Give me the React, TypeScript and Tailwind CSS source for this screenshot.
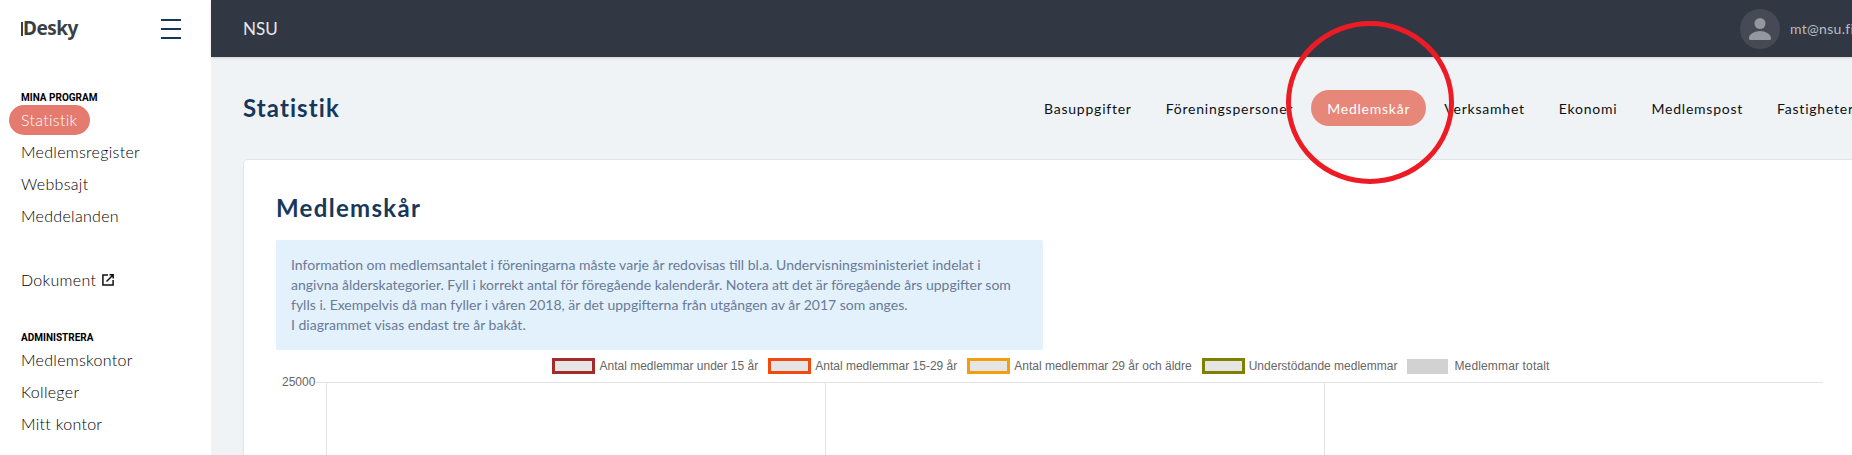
const navTop = ["Statistik", "Medlemsregister", "Webbsajt", "Meddelanden"];
const navAdmin = ["Medlemskontor", "Kolleger", "Mitt kontor"];
const tabs = ["Basuppgifter", "Föreningspersoner", "Medlemskår", "Verksamhet", "Ekonomi", "Medlemspost", "Fastigheter"];
const legend = [
  { label: "Antal medlemmar under 15 år", border: "border-[#a52a2a]" },
  { label: "Antal medlemmar 15-29 år", border: "border-[#f04a10]" },
  { label: "Antal medlemmar 29 år och äldre", border: "border-[#f59e0b]" },
  { label: "Understödande medlemmar", border: "border-[#808000]" },
];

function NavItem({ label, active }: { label: string; active?: boolean }) {
  return (
    <a
      className={
        active
          ? "mb-[1px] ml-[-12px] flex h-[30px] w-[81px] items-center rounded-full bg-[#e57a6e] pl-3 text-white"
          : "flex h-[32px] items-center text-black"
      }
    >
      {label}
    </a>
  );
}

export default function App() {
  return (
    <div className="relative flex h-[455px] w-[1852px] overflow-hidden bg-[#eff3f5] font-['Lato',sans-serif]">
      <aside className="flex w-[211px] shrink-0 flex-col bg-white pl-[21px] pr-[30px] text-[16px] font-light tracking-[0.3px]">
        <div className="flex h-[57px] items-center justify-between">
          <span className="flex items-center text-[19px] font-bold leading-none tracking-[-0.5px] text-[#3a3f46] font-['Noto_Sans',sans-serif]">
            <span className="mr-[0.5px] h-[14px] w-[1.5px] bg-[#3a3f46]" />
            Desky
          </span>
          <span className="flex h-[20px] w-[20px] flex-col justify-between">
            <span className="h-[2px] bg-[#14385c]" />
            <span className="h-[2px] bg-[#14385c]" />
            <span className="h-[2px] bg-[#14385c]" />
          </span>
        </div>
        <p className="mt-[35px] text-[10px] font-bold uppercase leading-[12px] tracking-normal text-black font-['Roboto',sans-serif]">Mina program</p>
        <div className="mt-[1px] flex flex-col">
          {navTop.map((item, i) => (
            <NavItem key={item} label={item} active={i === 0} />
          ))}
        </div>
        <a className="mt-[32px] flex h-[32px] items-center gap-[6px] text-black">
          Dokument
          <svg width="12" height="12" viewBox="0 0 12 12" fill="none" stroke="#111" strokeWidth="1.5">
            <path d="M6 .9H.9v10.2h10.2V6" />
            <path d="M4.500 7.500 11 1M7.500.8h3.700v3.700" />
          </svg>
        </a>
        <p className="mt-[36px] text-[10px] font-bold uppercase leading-[12px] tracking-normal text-black font-['Roboto',sans-serif]">Administrera</p>
        <div className="flex flex-col">
          {navAdmin.map((item) => (
            <NavItem key={item} label={item} />
          ))}
        </div>
      </aside>

      <div className="flex min-w-0 flex-1 flex-col">
        <header className="flex h-[57px] shrink-0 items-center justify-between bg-[#323843] pl-[32px] text-white shadow-sm">
          <span className="text-[17px] text-[#e8eaec]">NSU</span>
          <div className="flex w-[112px] shrink-0 items-center gap-[10px] overflow-hidden whitespace-nowrap">
            <svg className="shrink-0" width="40" height="40" viewBox="0 0 40 40">
              <circle cx="20" cy="20" r="20" fill="#454a54" />
              <circle cx="20" cy="14.500" r="5.500" fill="#94979d" />
              <path d="M9 29c0-4 6-7 11-7s11 3 11 7v.5a1.500 1.500 0 0 1-1.500 1.500h-19A1.500 1.500 0 0 1 9 29.500z" fill="#94979d" />
            </svg>
            <span className="text-[14px] tracking-[0.3px] text-[#b8bbc0]">mt@nsu.fi</span>
          </div>
        </header>

        <main className="flex-1 pl-[32px]">
          <div className="flex h-[102px] items-center justify-between">
            <h1 className="text-[24px] font-bold tracking-[1.1px] text-[#17385a]">Statistik</h1>
            <nav className="flex w-[824px] shrink-0 items-center gap-[2px] overflow-hidden whitespace-nowrap text-[14px] font-normal tracking-[0.77px] text-[#0d1014]">
              {tabs.map((tab) => (
                <a
                  key={tab}
                  className={
                    tab === "Medlemskår"
                      ? "flex h-[36px] items-center rounded-full bg-[#e6877a] px-4 text-white"
                      : "flex h-[36px] items-center px-4"
                  }
                >
                  {tab}
                </a>
              ))}
            </nav>
          </div>

          <section className="h-[300px] w-[1700px] rounded-t-[5px] border border-[#e1e5e8] bg-white pl-[32px] pt-[31px]">
            <h2 className="text-[24px] font-bold leading-[34px] tracking-[1.3px] text-[#17385a]">Medlemskår</h2>
            <div className="mt-[15px] h-[110px] w-[767px] rounded-[2px] bg-[#e2f1fc] px-[15px] py-[15px] text-[14px] leading-[20px] text-[#6a7a97]">
              Information om medlemsantalet i föreningarna måste varje år redovisas till bl.a. Undervisningsministeriet indelat i angivna ålderskategorier. Fyll i korrekt antal för föregående kalenderår. Notera att det är föregående års uppgifter som fylls i. Exempelvis då man fyller i våren 2018, är det uppgifterna från utgången av år 2017 som anges.
              <br />
              I diagrammet visas endast tre år bakåt.
            </div>

            <div className="flex h-[32px] w-[1550px] items-center justify-center gap-[10px] text-[12px] text-[#666] font-['Liberation_Sans',sans-serif]">
              {legend.map((item) => (
                <span key={item.label} className="flex items-center gap-[4px]">
                  <span className={`h-[16px] w-[43px] border-[3px] bg-[#e5e5e5] ${item.border}`} />
                  {item.label}
                </span>
              ))}
              <span className="flex items-center gap-[6px] tracking-[0.15px]">
                <span className="h-[15px] w-[41px] bg-[#d2d2d2]" />
                Medlemmar totalt
              </span>
            </div>

            <div className="flex font-['Liberation_Sans',sans-serif] text-[12px] text-[#666]">
              <span className="-mt-[6px] w-[40px] pl-[6px] leading-[12px]">25000</span>
              <div className="h-[80px] w-[1507px] border-t border-[#e3e3e3] pl-[10px]">
                <div className="grid h-full w-[1498px] grid-cols-3 border-l border-[#e3e3e3]">
                  <div className="border-r border-[#e3e3e3]" />
                  <div className="border-r border-[#e3e3e3]" />
                  <div />
                </div>
              </div>
            </div>
          </section>
        </main>
      </div>

      <svg className="pointer-events-none absolute left-[1284px] top-[19px]" width="172" height="167" viewBox="0 0 172 167" fill="none">
        <ellipse cx="86" cy="83.500" rx="81.500" ry="79" stroke="#ed1c24" strokeWidth="5" />
      </svg>
    </div>
  );
}
